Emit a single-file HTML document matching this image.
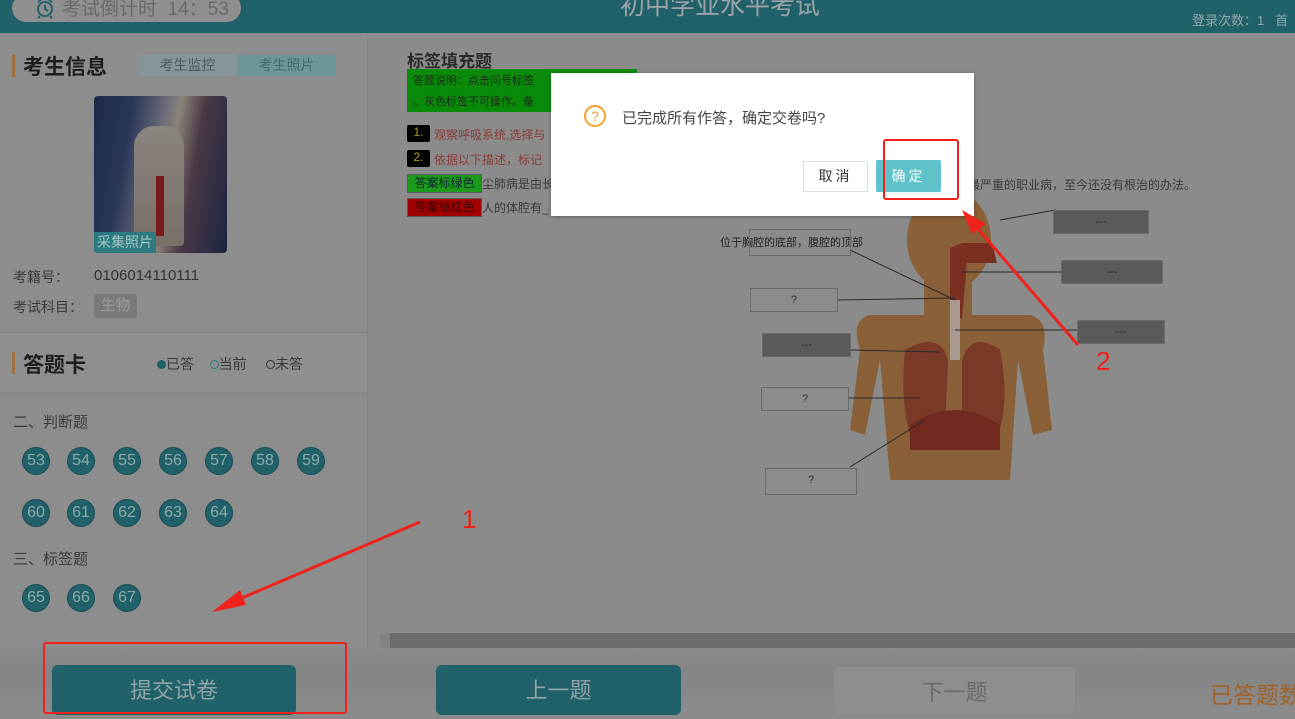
<!DOCTYPE html>
<html><head><meta charset="utf-8"><style>
*{margin:0;padding:0;box-sizing:border-box}
body{width:1295px;height:716px;overflow:hidden;position:relative;background:#8b8b8b;font-family:"Liberation Sans","Noto Sans CJK SC",sans-serif;color:#2a2a2a}
.a{position:absolute}
.hdr{left:0;top:0;width:1295px;height:33px;background:#21626a}
.pill{left:12px;top:-6px;width:229px;height:28px;border-radius:14px;background:#8f8f8f;color:#6a6a6a;font-size:19px;line-height:32px;padding-left:50px}
.title{left:560px;top:-11px;width:320px;text-align:center;color:#9aa4a6;font-size:25px;line-height:34px}
.login{left:1192px;top:10px;color:#93a8aa;font-size:13px;white-space:nowrap}
.left{left:0;top:33px;width:368px;height:615px;background:#8d8d8d;border-right:1px solid #858585}
.bar{width:3px;height:22px;background:#a0703c}
.ball{width:28px;height:28px;border-radius:50%;background:#21626a;border:1px solid #1a4d53;color:#8fa9ab;font-size:16px;text-align:center;line-height:26px}
.bottom{left:0;top:648px;width:1295px;height:68px;background:linear-gradient(#8a8a8a,#858585 40%,#8c8c8c)}
.btn{height:50px;border-radius:6px;background:#21626a;color:#8fa5a7;font-size:22px;text-align:center;line-height:52px}
.red{border:2px solid #f0221c}
.lbl{border:1px solid #6a6a6a;height:24px;background:#8c8c8c;font-size:11px;text-align:center;line-height:22px;color:#333}
.lbl.d{background:#5a5a5a;color:#2a2a2a}
</style></head><body>
<div class="a hdr"></div>
<div class="a pill"><svg class="a" style="left:22px;top:4px" width="22" height="22" viewBox="0 0 22 22"><circle cx="11" cy="11" r="7" fill="none" stroke="#21626a" stroke-width="2"/><path d="M11 7v4l3 2M4 4l3-2M18 4l-3-2M6 18l-2 2M16 18l2 2" stroke="#21626a" stroke-width="2" fill="none"/></svg>考试倒计时&nbsp; 14：53</div>
<div class="a title">初中学业水平考试</div>
<div class="a login">登录次数：1&nbsp;&nbsp; 首</div>

<div class="a left"></div>
<div class="a bar" style="left:12px;top:55px"></div>
<div class="a" style="left:23px;top:51px;font-size:21px;font-weight:bold;color:#1e1e1e">考生信息</div>
<div class="a" style="left:138px;top:55px;width:99px;height:21px;background:#85959a;color:#4a5a5e;font-size:14px;text-align:center;line-height:21px">考生监控</div>
<div class="a" style="left:237px;top:55px;width:99px;height:21px;background:#6e9598;color:#3c6e72;font-size:14px;text-align:center;line-height:21px">考生照片</div>
<div class="a" style="left:94px;top:96px;width:133px;height:157px;border-radius:4px;overflow:hidden;background:linear-gradient(100deg,#1e2a48 0%,#2a3658 25%,#6a6a78 45%,#8a8478 55%,#4a3a46 70%,#1c2440 100%)">
<div class="a" style="left:40px;top:30px;width:50px;height:120px;background:linear-gradient(#8a847e,#7a706a);border-radius:20px 20px 4px 4px"></div>
<div class="a" style="left:62px;top:80px;width:8px;height:60px;background:#7a1a1a"></div>
<div class="a" style="left:0;top:136px;width:62px;height:21px;background:#2a7a80;color:#a8c4c6;font-size:14px;line-height:21px;text-align:center">采集照片</div></div>
<div class="a" style="left:13px;top:267px;font-size:14px;color:#3a3a3a">考籍号：</div>
<div class="a" style="left:94px;top:267px;font-size:15px;color:#333">0106014110111</div>
<div class="a" style="left:13px;top:297px;font-size:14px;color:#3a3a3a">考试科目：</div>
<div class="a" style="left:94px;top:294px;width:43px;height:24px;border-radius:3px;background:#7a7a7a;color:#9a9a9a;font-size:15px;line-height:24px;text-align:center">生物</div>
<div class="a" style="left:0;top:332px;width:367px;height:60px;background:#8f8f8f;border-top:1px solid #828282;box-shadow:0 2px 3px #858585"></div>
<div class="a bar" style="left:12px;top:352px"></div>
<div class="a" style="left:23px;top:349px;font-size:21px;font-weight:bold;color:#1e1e1e">答题卡</div>
<div class="a" style="left:157px;top:354px;font-size:14px;color:#3a3a3a;white-space:nowrap"><span style="display:inline-block;width:9px;height:9px;border-radius:50%;background:#21626a"></span>已答&nbsp;&nbsp;&nbsp;&nbsp;<span style="display:inline-block;width:9px;height:9px;border-radius:50%;border:1px solid #2e7a80"></span>当前&nbsp;&nbsp;&nbsp;&nbsp;&nbsp;<span style="display:inline-block;width:9px;height:9px;border-radius:50%;border:1px solid #333"></span>未答</div>
<div class="a" style="left:13px;top:411px;font-size:15px;color:#3a3a3a">二、判断题</div>
<div class="a ball" style="left:22px;top:447px">53</div><div class="a ball" style="left:67px;top:447px">54</div><div class="a ball" style="left:113px;top:447px">55</div><div class="a ball" style="left:159px;top:447px">56</div><div class="a ball" style="left:205px;top:447px">57</div><div class="a ball" style="left:251px;top:447px">58</div><div class="a ball" style="left:297px;top:447px">59</div>
<div class="a ball" style="left:22px;top:499px">60</div><div class="a ball" style="left:67px;top:499px">61</div><div class="a ball" style="left:113px;top:499px">62</div><div class="a ball" style="left:159px;top:499px">63</div><div class="a ball" style="left:205px;top:499px">64</div>
<div class="a" style="left:13px;top:548px;font-size:15px;color:#3a3a3a">三、标签题</div>
<div class="a ball" style="left:22px;top:584px">65</div><div class="a ball" style="left:67px;top:584px">66</div><div class="a ball" style="left:113px;top:584px">67</div>

<div class="a" style="left:407px;top:47px;font-size:17px;font-weight:bold;color:#2a2a2a">标签填充题</div>
<div class="a" style="left:407px;top:69px;width:230px;height:43px;background:#0a8a0a;font-size:11px;padding:2px 6px;line-height:21px;color:#1a2a1a">答题说明：点击问号标签<br>。灰色标签不可操作。备</div>
<div class="a" style="left:407px;top:125px;width:23px;height:17px;background:#050505;color:#a89a20;font-size:12px;text-align:center;border-radius:2px">1.</div>
<div class="a" style="left:434px;top:126px;font-size:12px;color:#8a3a3a">观察呼吸系统,选择与</div>
<div class="a" style="left:407px;top:150px;width:23px;height:17px;background:#050505;color:#a89a20;font-size:12px;text-align:center;border-radius:2px">2.</div>
<div class="a" style="left:434px;top:151px;font-size:12px;color:#8a3a3a">依据以下描述，标记</div>
<div class="a" style="left:407px;top:174px;width:75px;height:19px;background:#1c9a1c;border:1px solid #5a5a5a;font-size:12px;text-align:center;line-height:17px;color:#123">答案标绿色</div>
<div class="a" style="left:482px;top:175px;font-size:12px;color:#3a3a3a">尘肺病是由长</div>
<div class="a" style="left:407px;top:198px;width:75px;height:19px;background:#a00000;border:1px solid #5a5a5a;font-size:12px;text-align:center;line-height:17px;color:#3a0000">答案标红色</div>
<div class="a" style="left:482px;top:199px;font-size:12px;color:#3a3a3a">人的体腔有_</div>
<div class="a" style="left:968px;top:176px;font-size:12px;color:#3a3a3a;white-space:nowrap">最严重的职业病，至今还没有根治的办法。</div>

<svg class="a" style="left:700px;top:180px" width="480" height="330" viewBox="0 0 480 330">
<g fill="#8a6038">
<ellipse cx="249" cy="60" rx="42" ry="50"/>
<rect x="224" y="90" width="48" height="50"/>
<path d="M170 135 Q150 140 160 170 L150 250 L165 255 L180 180 L190 300 L310 300 L318 180 L333 255 L352 250 L343 170 Q350 140 330 135 Z"/>
</g>
<path d="M262 63 h30 l5 20 h-30 l-5 55 h-12 l0 -70 z" fill="#7a3020"/>
<rect x="250" y="120" width="10" height="60" fill="#a89a90"/>
<path d="M205 170 Q240 150 248 180 L245 250 L210 255 Q200 220 205 170Z M262 180 Q272 150 300 170 Q310 220 298 255 L262 250Z" fill="#7a3a28"/>
<path d="M210 245 Q255 215 300 245 L300 270 L210 270Z" fill="#702a20"/>
<g stroke="#2a2a2a" stroke-width="1" fill="none">
<path d="M150 70 L255 120 M138 120 L255 118 M151 170 L240 172 M148 218 L220 218 M150 287 L225 240 M300 40 L355 30 M262 92 L361 92 M255 150 L377 150"/>
</g>
</svg>
<div class="a" style="left:720px;top:234px;font-size:11px;color:#222">位于胸腔的底部，腹腔的顶部</div>
<div class="a lbl" style="left:749px;top:229px;width:102px;height:27px;background:transparent"></div>
<div class="a lbl" style="left:750px;top:288px;width:88px">?</div>
<div class="a lbl d" style="left:762px;top:333px;width:89px">---</div>
<div class="a lbl" style="left:761px;top:387px;width:88px">?</div>
<div class="a lbl" style="left:765px;top:468px;width:92px;height:27px">?</div>
<div class="a lbl d" style="left:1053px;top:210px;width:96px">---</div>
<div class="a lbl d" style="left:1061px;top:260px;width:102px">---</div>
<div class="a lbl d" style="left:1077px;top:320px;width:88px">---</div>

<div class="a" style="left:380px;top:633px;width:915px;height:15px;background:#6c6c6c;border-left:10px solid #828282"></div>

<div class="a bottom"></div>
<div class="a btn" style="left:52px;top:665px;width:244px">提交试卷</div>
<div class="a btn" style="left:436px;top:665px;width:245px">上一题</div>
<div class="a btn" style="left:833px;top:666px;width:243px;background:#8e8e8e;border:1px solid #868686;color:#6a6a6a">下一题</div>
<div class="a" style="left:1210px;top:676px;font-size:23px;color:#a0622a;white-space:nowrap">已答题数</div>

<div class="a" style="left:551px;top:73px;width:423px;height:143px;background:#fff;box-shadow:0 1px 4px rgba(0,0,0,.3)"></div>
<div class="a" style="left:584px;top:105px;width:22px;height:22px;border-radius:50%;border:2px solid #f6a02c;color:#f6a02c;font-size:14px;text-align:center;line-height:18px">?</div>
<div class="a" style="left:622px;top:107px;font-size:15px;color:#444;white-space:nowrap">已完成所有作答，确定交卷吗?</div>
<div class="a" style="left:803px;top:161px;width:65px;height:31px;border:1px solid #ddd;font-size:14px;text-align:center;line-height:29px;color:#333;letter-spacing:3px">取消</div>
<div class="a" style="left:876px;top:160px;width:65px;height:32px;background:#5fc1c9;border-radius:2px;font-size:14px;text-align:center;line-height:32px;color:#fff;letter-spacing:3px">确定</div>

<div class="a red" style="left:883px;top:139px;width:76px;height:61px;border-radius:3px"></div>
<div class="a red" style="left:43px;top:642px;width:304px;height:72px;border-radius:3px"></div>
<svg class="a" style="left:0;top:0" width="1295" height="716">
<path d="M420 522 L230 603" stroke="#f0221c" stroke-width="3"/><path d="M212 612 L240 590 L246 605 Z" fill="#f0221c"/>
<path d="M1078 345 L972 222" stroke="#f0221c" stroke-width="3"/><path d="M962 210 L986 224 L972 234 Z" fill="#f0221c"/>
<text x="462" y="528" font-size="26" fill="#f0221c" font-family="Liberation Sans">1</text>
<text x="1096" y="370" font-size="26" fill="#f0221c" font-family="Liberation Sans">2</text>
</svg>
</body></html>
